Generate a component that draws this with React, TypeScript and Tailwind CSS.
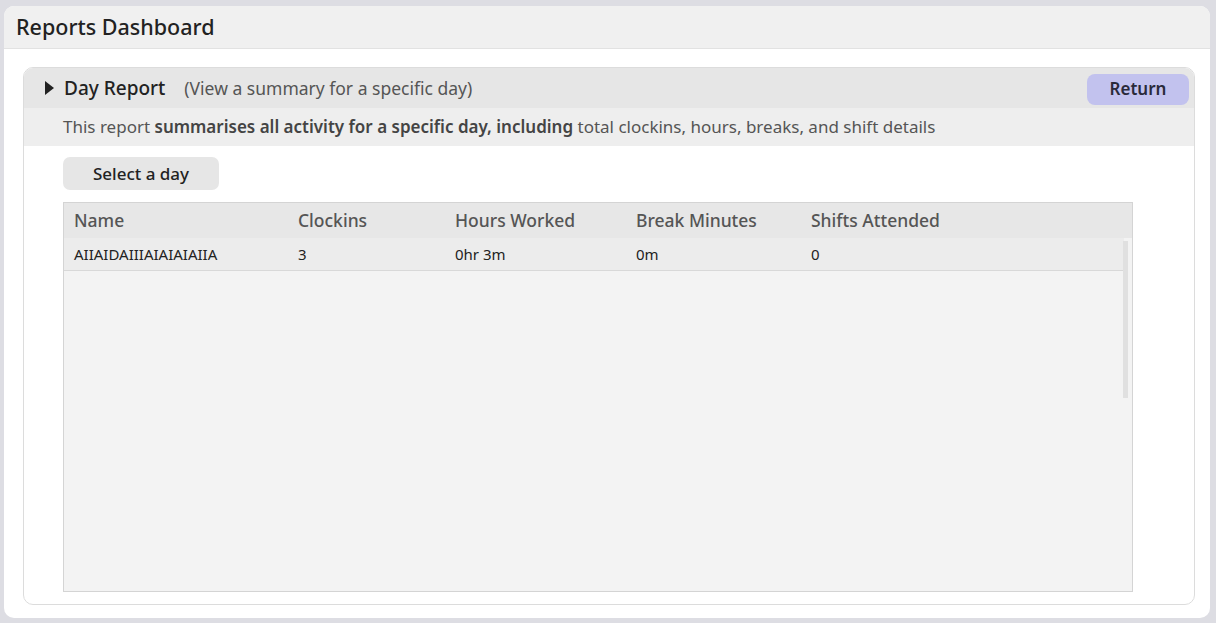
const columns = ["Name", "Clockins", "Hours Worked", "Break Minutes", "Shifts Attended"];

const rows = [
  { name: "AIIAIDAIIIAIAIAIAIIA", clockins: "3", hours: "0hr 3m", breaks: "0m", shifts: "0" },
];

const colWidths = ["w-[224px]", "w-[157px]", "w-[181px]", "w-[175px]", "flex-1"];

export default function App() {
  return (
    <div className="w-[1216px] h-[623px] bg-[#dddde3] p-[4px] pt-[6px] pb-[5px] font-['Noto_Sans',sans-serif] text-[#222]">
      <div className="w-[1206px] h-full bg-white rounded-[10px] flex flex-col overflow-hidden">
        <div className="h-[43px] bg-[#f0f0f0] border-b border-[#e2e2e2] flex items-center px-[12px]">
          <h1 className="text-[21.5px] font-medium leading-none">Reports Dashboard</h1>
        </div>

        <div className="flex-1 pl-[19px] pr-[15px] pt-[18px] pb-[13px]">
          <div className="h-full border border-[#dcdcdc] rounded-[10px] overflow-hidden flex flex-col">
            <div className="h-[40px] bg-[#e6e6e6] flex items-center pl-[21px] pr-[5px]">
              <svg width="9" height="14" viewBox="0 0 9 14" className="mr-[10px]">
                <path d="M0 0 L9 7 L0 14 Z" fill="#222" />
              </svg>
              <span className="text-[19px] font-medium">Day Report</span>
              <span className="text-[17.5px] text-[#555] ml-[19px]">(View a summary for a specific day)</span>
              <button className="ml-auto w-[102px] h-[31px] rounded-[8px] bg-[#c2c2ee] text-[17px] font-semibold text-[#2a2a3a] mt-[2px]">
                Return
              </button>
            </div>
            <div className="h-[38px] bg-[#eeeeee] flex items-center pl-[39px] text-[17px] text-[#555]">
              <span>
                This report <b className="font-semibold text-[#444]">summarises all activity for a specific day, including</b> total clockins, hours, breaks, and shift details
              </span>
            </div>

            <div className="flex-1 flex flex-col pl-[39px] pr-[61px] pt-[11px] pb-[12px]">
              <button className="w-[156px] h-[33px] rounded-[7px] bg-[#e6e6e6] text-[17px] font-medium text-[#222]">
                Select a day
              </button>

              <div className="mt-[12px] flex-1 border border-[#d4d4d4] bg-[#f3f3f3] flex flex-col relative">
                <div className="h-[35px] bg-[#e7e7e7] flex items-center text-[17.5px] font-medium text-[#555]">
                  {columns.map((c, i) => (
                    <div key={c} className={`${colWidths[i]} pl-[10px]`}>
                      {c}
                    </div>
                  ))}
                </div>
                {rows.map((r) => (
                  <div key={r.name} className="h-[33px] bg-[#ececec] border-b border-[#d8d8d8] flex items-center text-[15px] text-[#222] mr-[8px]">
                    <div className={`${colWidths[0]} pl-[10px]`}>{r.name}</div>
                    <div className={`${colWidths[1]} pl-[10px]`}>{r.clockins}</div>
                    <div className={`${colWidths[2]} pl-[10px]`}>{r.hours}</div>
                    <div className={`${colWidths[3]} pl-[10px]`}>{r.breaks}</div>
                    <div className={`${colWidths[4]} pl-[10px]`}>{r.shifts}</div>
                  </div>
                ))}
                <div className="absolute right-[4px] top-[38px] w-[5px] h-[157px] bg-[#e0e0e0]" />
              </div>
            </div>
          </div>
        </div>
      </div>
    </div>
  );
}
